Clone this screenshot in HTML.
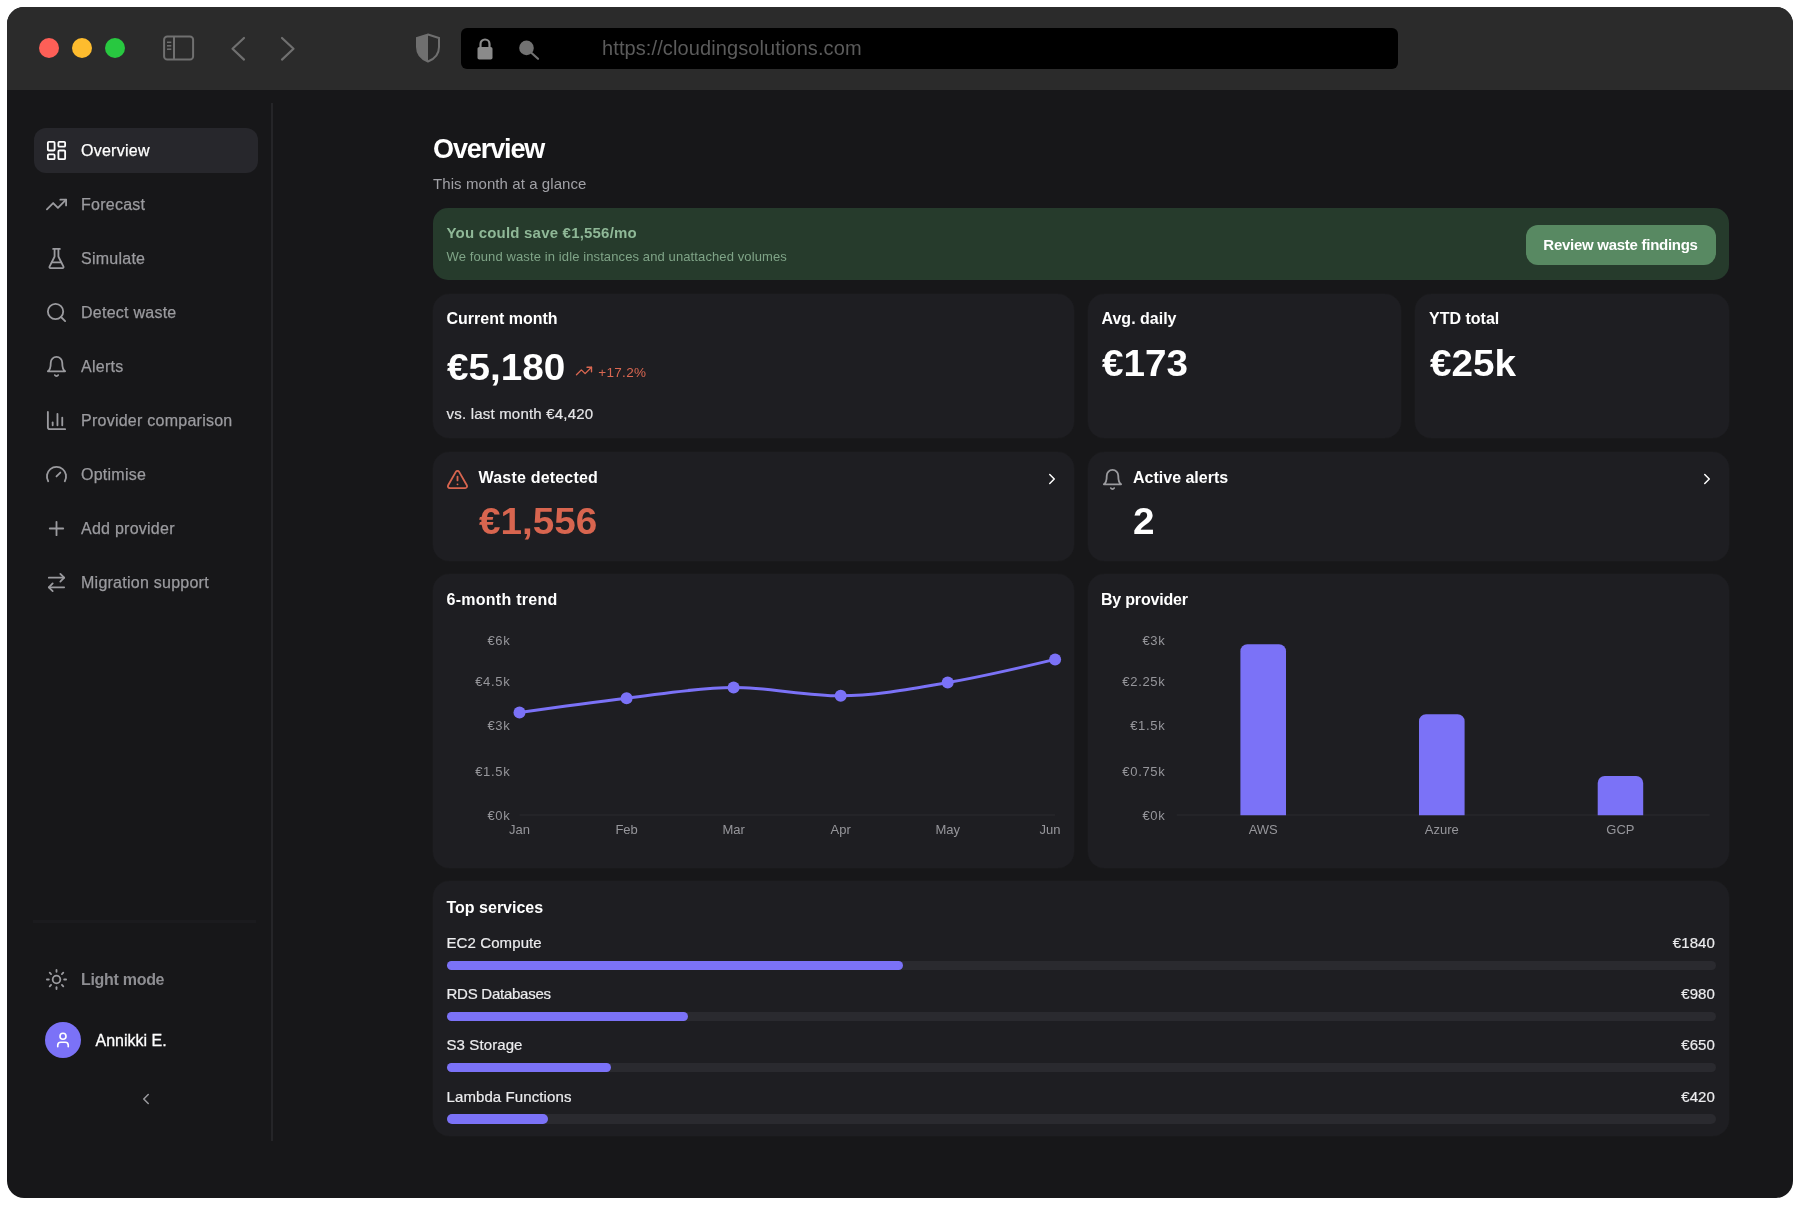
<!DOCTYPE html>
<html lang="en">
<head>
<meta charset="utf-8">
<title>Overview</title>
<style>
*{box-sizing:border-box;margin:0;padding:0}
html,body{width:1804px;height:1210px;background:#fff;overflow:hidden}
body{font-family:"Liberation Sans",sans-serif;color:#fff;position:relative}
.abs{position:absolute}
#win{position:absolute;left:7px;top:7px;width:1786px;height:1191px;border-radius:17px;background:#171719;overflow:hidden}
#o{position:absolute;left:-7px;top:-7px;width:1804px;height:1210px;will-change:transform}
#bar{position:absolute;left:0;top:0;width:1804px;height:90px;background:#2b2b2b}
.dot{position:absolute;top:38px;width:20px;height:20px;border-radius:50%}
#url{position:absolute;left:461px;top:28px;width:937px;height:41px;border-radius:6px;background:#000}
#urltxt{position:absolute;left:602px;top:35px;font-size:20px;line-height:26px;color:#5b5b5b;white-space:nowrap;letter-spacing:0.1px}
/* sidebar */
#side{position:absolute;left:0;top:0;width:272px;height:1210px}
#vline{position:absolute;left:271.300px;top:103px;width:1.300px;height:1038px;background:#252528}
#hline{position:absolute;left:33px;top:920.300px;width:223px;height:2.600px;background:#1b1b1e}
.nav{position:absolute;left:34px;width:224px;height:45px;border-radius:12px;font-size:16px;line-height:45px;color:#9b9b9f;white-space:nowrap;letter-spacing:0.25px;-webkit-text-stroke:0.25px currentColor}
.nav.on{background:#27272c;color:#fff}
.nav span{position:absolute;left:47px;top:0}
.nav svg{position:absolute;left:11px;top:11px;width:23px;height:23px;fill:none;stroke:currentColor;stroke-width:1.9;stroke-linecap:round;stroke-linejoin:round}
/* main */
.card{position:absolute;background:#1e1e22;border-radius:16px;box-shadow:0 0 0 1px rgba(255,255,255,0.012)}
.h{position:absolute;font-weight:bold;font-size:16px;line-height:20px;color:#fff;white-space:nowrap}
.big{position:absolute;font-weight:bold;font-size:36.5px;line-height:40px;color:#fff;white-space:nowrap;letter-spacing:0;transform:scaleX(1.06);transform-origin:0 50%}
.t{position:absolute;white-space:nowrap}
.svc{font-size:15px;line-height:20px;color:#ececee;letter-spacing:0.1px;-webkit-text-stroke:0.2px #ececee}
</style>
</head>
<body>
<div id="win"><div id="o">
  <div id="bar">
    <div class="dot" style="left:39px;background:#fe5f57"></div>
    <div class="dot" style="left:72px;background:#febc2e"></div>
    <div class="dot" style="left:105px;background:#28c840"></div>
    <!-- sidebar toggle -->
    <svg class="abs" style="left:162px;top:34px" width="34" height="30" viewBox="0 0 34 30" fill="none" stroke="#707070" stroke-width="2">
      <rect x="2.100" y="2.600" width="29" height="23" rx="3.200"/>
      <line x1="12" y1="2.600" x2="12" y2="25.600"/>
      <line x1="5" y1="8.300" x2="9.300" y2="8.300" stroke-width="1.500"/>
      <line x1="5" y1="11.800" x2="9.300" y2="11.800" stroke-width="1.500"/>
      <line x1="5" y1="15.200" x2="9.300" y2="15.200" stroke-width="1.500"/>
    </svg>
    <svg class="abs" style="left:227px;top:35px" width="24" height="28" viewBox="0 0 24 28" fill="none" stroke="#707070" stroke-width="2.200" stroke-linecap="round" stroke-linejoin="round"><path d="M17 3 L5.500 13.800 L17 24.600"/></svg>
    <svg class="abs" style="left:277px;top:35px" width="24" height="28" viewBox="0 0 24 28" fill="none" stroke="#707070" stroke-width="2.200" stroke-linecap="round" stroke-linejoin="round"><path d="M5 3 L16.500 13.800 L5 24.600"/></svg>
    <!-- shield -->
    <svg class="abs" style="left:415px;top:33px" width="26" height="30" viewBox="0 0 26 30">
      <path d="M13 1.5 L24 5 V14 C24 21 19.5 26 13 28.5 C6.500 26 2 21 2 14 V5 Z" fill="none" stroke="#6f6f6f" stroke-width="2"/>
      <path d="M13 1.5 L2 5 V14 C2 21 6.500 26 13 28.500 Z" fill="#6f6f6f"/>
    </svg>
    <div id="url"></div>
    <!-- lock -->
    <svg class="abs" style="left:476px;top:37px" width="18" height="24" viewBox="0 0 18 24">
      <path d="M4.500 11 V7 a4.500 4.500 0 0 1 9 0 V11" fill="none" stroke="#8a8a8a" stroke-width="2.2"/>
      <rect x="1.500" y="10" width="15" height="12.500" rx="1.800" fill="#8a8a8a"/>
    </svg>
    <!-- search -->
    <svg class="abs" style="left:517px;top:38px" width="24" height="24" viewBox="0 0 24 24">
      <circle cx="9.500" cy="9.900" r="7.300" fill="#727272"/>
      <line x1="14" y1="14.500" x2="21" y2="20.800" stroke="#727272" stroke-width="2.200" stroke-linecap="round"/>
    </svg>
    <div id="urltxt">https://cloudingsolutions.com</div>
  </div>

  <div id="vline"></div>
  <div id="hline"></div>
  <div id="side">
    <div class="nav on" style="top:128px"><svg viewBox="0 0 24 24"><rect x="3" y="3" width="7" height="9" rx="1"/><rect x="14" y="3" width="7" height="5" rx="1"/><rect x="14" y="12" width="7" height="9" rx="1"/><rect x="3" y="16" width="7" height="5" rx="1"/></svg><span>Overview</span></div>
    <div class="nav" style="top:182px"><svg viewBox="0 0 24 24"><polyline points="22 7 13.5 15.5 8.5 10.5 2 17"/><polyline points="16 7 22 7 22 13"/></svg><span>Forecast</span></div>
    <div class="nav" style="top:236px"><svg viewBox="0 0 24 24"><path d="M10 2v7.527a2 2 0 0 1-.211.896L4.720 20.550a1 1 0 0 0 .9 1.450h12.760a1 1 0 0 0 .9-1.450l-5.069-10.127A2 2 0 0 1 14 9.527V2"/><path d="M8.500 2h7"/><path d="M7 16h10"/></svg><span>Simulate</span></div>
    <div class="nav" style="top:290px"><svg viewBox="0 0 24 24"><circle cx="11" cy="11" r="8"/><path d="m21 21-4.300-4.300"/></svg><span>Detect waste</span></div>
    <div class="nav" style="top:344px"><svg viewBox="0 0 24 24"><path d="M6 8a6 6 0 0 1 12 0c0 7 3 9 3 9H3s3-2 3-9"/><path d="M10.300 21a1.940 1.940 0 0 0 3.400 0"/></svg><span>Alerts</span></div>
    <div class="nav" style="top:398px"><svg viewBox="0 0 24 24"><path d="M3 3v16a2 2 0 0 0 2 2h16"/><path d="M18 17V9"/><path d="M13 17V5"/><path d="M8 17v-3"/></svg><span>Provider comparison</span></div>
    <div class="nav" style="top:452px"><svg viewBox="0 0 24 24"><path d="m12 14 4-4"/><path d="M3.340 19a10 10 0 1 1 17.320 0"/></svg><span>Optimise</span></div>
    <div class="nav" style="top:506px"><svg viewBox="0 0 24 24"><path d="M5 12h14"/><path d="M12 5v14"/></svg><span>Add provider</span></div>
    <div class="nav" style="top:560px"><svg viewBox="0 0 24 24"><path d="m16 3 4 4-4 4"/><path d="M20 7H4"/><path d="m8 21-4-4 4-4"/><path d="M4 17h16"/></svg><span>Migration support</span></div>
    <div class="nav" style="top:957px"><svg viewBox="0 0 24 24"><circle cx="12" cy="12" r="4"/><path d="M12 2v2"/><path d="M12 20v2"/><path d="m4.930 4.930 1.410 1.410"/><path d="m17.660 17.660 1.410 1.410"/><path d="M2 12h2"/><path d="M20 12h2"/><path d="m6.340 17.660-1.410 1.410"/><path d="m19.070 4.930-1.410 1.410"/></svg><span style="font-weight:bold;letter-spacing:-0.3px;-webkit-text-stroke:0;color:#8e8e92">Light mode</span></div>
    <div class="abs" style="left:45px;top:1022px;width:36px;height:36px;border-radius:50%;background:#7b72f7"></div>
    <svg class="abs" style="left:54px;top:1031px" width="18" height="18" viewBox="0 0 24 24" fill="none" stroke="#fff" stroke-width="2.2" stroke-linecap="round" stroke-linejoin="round"><path d="M19 21v-2a4 4 0 0 0-4-4H9a4 4 0 0 0-4 4v2"/><circle cx="12" cy="7" r="4"/></svg>
    <div class="t" style="left:95.500px;top:1031px;font-size:16px;line-height:20px;color:#fff;-webkit-text-stroke:0.3px #fff">Annikki E.</div>
    <svg class="abs" style="left:137px;top:1090px" width="18" height="18" viewBox="0 0 24 24" fill="none" stroke="#9b9b9f" stroke-width="2" stroke-linecap="round" stroke-linejoin="round"><path d="m15 18-6-6 6-6"/></svg>
  </div>

  <div id="main">
    <div class="t" id="title" style="left:433px;top:132px;font-size:27px;line-height:34px;font-weight:bold;color:#fff;letter-spacing:-1.1px">Overview</div>
    <div class="t" id="sub" style="left:433px;top:174px;font-size:15px;line-height:20px;color:#a1a1a6;letter-spacing:0.08px">This month at a glance</div>

    <!-- banner -->
    <div class="abs" style="left:433px;top:208.300px;width:1296px;height:71.700px;border-radius:15px;background:#263b2c"></div>
    <div class="t" id="b1" style="left:446.500px;top:223px;font-size:15px;line-height:20px;font-weight:bold;color:#8fb897;letter-spacing:0.2px">You could save €1,556/mo</div>
    <div class="t" id="b2" style="left:446.500px;top:248px;font-size:13px;line-height:18px;color:#7fa487;letter-spacing:0.11px">We found waste in idle instances and unattached volumes</div>
    <div class="abs" style="left:1525.500px;top:224.500px;width:190px;height:40px;border-radius:12px;background:#588962"></div>
    <div class="t" id="btn" style="left:1525.500px;top:224.500px;width:190px;height:40px;line-height:40px;text-align:center;font-size:15px;font-weight:bold;color:#fff;letter-spacing:-0.27px">Review waste findings</div>

    <!-- row 1 -->
    <div class="card" style="left:433px;top:293.800px;width:641px;height:144.700px"></div>
    <div class="card" style="left:1087.600px;top:293.800px;width:313.700px;height:144.700px"></div>
    <div class="card" style="left:1415.300px;top:293.800px;width:313.700px;height:144.700px"></div>
    <div class="h" id="h1" style="left:446.500px;top:309px">Current month</div>
    <div class="big" id="v1" style="left:446.500px;top:348px">€5,180</div>
    <svg class="abs" style="left:575.300px;top:362.300px" width="18" height="18" viewBox="0 0 24 24" fill="none" stroke="#da6751" stroke-width="1.800" stroke-linecap="round" stroke-linejoin="round"><polyline points="22 7 13.5 15.5 8.5 10.5 2 17"/><polyline points="16 7 22 7 22 13"/></svg>
    <div class="t" id="pct" style="left:598.300px;top:362.500px;font-size:13.500px;line-height:20px;color:#da6751;letter-spacing:0.3px">+17.2%</div>
    <div class="t" id="vs" style="left:446.500px;top:404px;font-size:15px;line-height:20px;color:#e6e6e8;letter-spacing:0.2px;-webkit-text-stroke:0.2px #e6e6e8">vs. last month €4,420</div>
    <div class="h" id="h2" style="left:1101.500px;top:309px">Avg. daily</div>
    <div class="big" id="v2" style="left:1101.500px;top:343.700px">€173</div>
    <div class="h" id="h3" style="left:1429px;top:309px">YTD total</div>
    <div class="big" id="v3" style="left:1429.500px;top:343.700px">€25k</div>

    <!-- row 2 -->
    <div class="card" style="left:433px;top:452px;width:641px;height:108.600px"></div>
    <div class="card" style="left:1087.600px;top:452px;width:641.400px;height:108.600px"></div>
    <svg class="abs" style="left:446px;top:467.500px" width="23" height="23" viewBox="0 0 24 24" fill="none" stroke="#d8654f" stroke-width="1.900" stroke-linecap="round" stroke-linejoin="round"><path d="m21.730 18-8-14a2 2 0 0 0-3.480 0l-8 14A2 2 0 0 0 4 21h16a2 2 0 0 0 1.730-3"/><path d="M12 9v4"/><path d="M12 17h.01"/></svg>
    <div class="h" id="h4" style="left:478.500px;top:468px;letter-spacing:0.2px">Waste detected</div>
    <div class="big" id="v4" style="left:478.500px;top:501.500px;color:#d8654f">€1,556</div>
    <svg class="abs" style="left:1042.500px;top:469.800px" width="18" height="18" viewBox="0 0 24 24" fill="none" stroke="#fff" stroke-width="2" stroke-linecap="round" stroke-linejoin="round"><path d="m9 18 6-6-6-6"/></svg>
    <svg class="abs" style="left:1101px;top:467.500px" width="23" height="23" viewBox="0 0 24 24" fill="none" stroke="#9b9b9f" stroke-width="1.900" stroke-linecap="round" stroke-linejoin="round"><path d="M6 8a6 6 0 0 1 12 0c0 7 3 9 3 9H3s3-2 3-9"/><path d="M10.300 21a1.940 1.940 0 0 0 3.400 0"/></svg>
    <div class="h" id="h5" style="left:1133px;top:468px">Active alerts</div>
    <div class="big" id="v5" style="left:1132.500px;top:501.500px">2</div>
    <svg class="abs" style="left:1697.500px;top:469.800px" width="18" height="18" viewBox="0 0 24 24" fill="none" stroke="#fff" stroke-width="2" stroke-linecap="round" stroke-linejoin="round"><path d="m9 18 6-6-6-6"/></svg>

    <!-- row 3 -->
    <div class="card" style="left:433px;top:574px;width:641px;height:294px"></div>
    <div class="card" style="left:1087.600px;top:574px;width:641.400px;height:294px"></div>
    <div class="h" id="h6" style="left:446.500px;top:590px;letter-spacing:0.27px">6-month trend</div>
    <div class="h" id="h7" style="left:1101px;top:590px;letter-spacing:-0.2px">By provider</div>
    <svg class="abs" style="left:433px;top:574px" width="1296" height="294" viewBox="433 574 1296 294" font-family="Liberation Sans, sans-serif" font-size="13" fill="#96969b">
      <line x1="519.5" y1="815" x2="1055.1" y2="815" stroke="#2a2a2f" stroke-width="1"/>
      <text x="510.5" y="644.7" text-anchor="end" letter-spacing="0.7">€6k</text>
      <text x="510.5" y="685.6" text-anchor="end" letter-spacing="0.7">€4.5k</text>
      <text x="510.5" y="729.9" text-anchor="end" letter-spacing="0.7">€3k</text>
      <text x="510.5" y="775.5" text-anchor="end" letter-spacing="0.7">€1.5k</text>
      <text x="510.5" y="820" text-anchor="end" letter-spacing="0.7">€0k</text>
      <text x="519.5" y="833.8" text-anchor="middle">Jan</text>
      <text x="626.6" y="833.8" text-anchor="middle">Feb</text>
      <text x="733.6" y="833.8" text-anchor="middle">Mar</text>
      <text x="840.7" y="833.8" text-anchor="middle">Apr</text>
      <text x="947.7" y="833.8" text-anchor="middle">May</text>
      <text x="1060.5" y="833.8" text-anchor="end">Jun</text>
      <path d="M519.5,712.5C555.2,707.4,590.9,702.4,626.6,698.2C662.3,694.0,697.9,687.5,733.6,687.5C769.3,687.5,805.0,695.8,840.7,695.8C876.4,695.8,912.0,688.6,947.7,682.6C983.5,676.5,1019.3,668.0,1055.1,659.4" fill="none" stroke="#7b72f7" stroke-width="3" stroke-linecap="round"/>
      <circle cx="519.5" cy="712.5" r="6" fill="#7b72f7"/>
      <circle cx="626.6" cy="698.2" r="6" fill="#7b72f7"/>
      <circle cx="733.6" cy="687.5" r="6" fill="#7b72f7"/>
      <circle cx="840.7" cy="695.8" r="6" fill="#7b72f7"/>
      <circle cx="947.7" cy="682.6" r="6" fill="#7b72f7"/>
      <circle cx="1055.1" cy="659.4" r="6" fill="#7b72f7"/>
      <line x1="1176.7" y1="815" x2="1709.7" y2="815" stroke="#2a2a2f" stroke-width="1"/>
      <text x="1165.5" y="644.7" text-anchor="end" letter-spacing="0.7">€3k</text>
      <text x="1165.5" y="685.6" text-anchor="end" letter-spacing="0.7">€2.25k</text>
      <text x="1165.5" y="729.9" text-anchor="end" letter-spacing="0.7">€1.5k</text>
      <text x="1165.5" y="775.5" text-anchor="end" letter-spacing="0.7">€0.75k</text>
      <text x="1165.5" y="820" text-anchor="end" letter-spacing="0.7">€0k</text>
      <path d="M1240.4,815.2V651.2a7,7 0 0 1 7,-7H1279a7,7 0 0 1 7,7V815.2Z" fill="#7b72f7"/>
      <text x="1263.2" y="833.8" text-anchor="middle">AWS</text>
      <path d="M1419,815.2V721.3a7,7 0 0 1 7,-7H1457.6a7,7 0 0 1 7,7V815.2Z" fill="#7b72f7"/>
      <text x="1441.8" y="833.8" text-anchor="middle">Azure</text>
      <path d="M1597.7,815.2V783a7,7 0 0 1 7,-7H1636.2a7,7 0 0 1 7,7V815.2Z" fill="#7b72f7"/>
      <text x="1620.4" y="833.8" text-anchor="middle">GCP</text>
    </svg>

    <!-- row 4 -->
    <div class="card" style="left:433px;top:881.200px;width:1296px;height:254.500px"></div>
    <div class="h" id="h8" style="left:446.500px;top:898px">Top services</div>
    <div class="t svc" style="left:446.500px;top:932.9px">EC2 Compute</div>
    <div class="t svc" style="right:89px;top:932.9px">€1840</div>
    <div class="abs" style="left:446.500px;top:960.7px;width:1269px;height:9.400px;border-radius:5px;background:#2a2a2f"></div>
    <div class="abs" style="left:446.500px;top:960.7px;width:456.7px;height:9.400px;border-radius:5px;background:#7b72f7"></div>
    <div class="t svc" style="left:446.500px;top:984.1px;letter-spacing:-0.25px">RDS Databases</div>
    <div class="t svc" style="right:89px;top:984.1px">€980</div>
    <div class="abs" style="left:446.500px;top:1011.9px;width:1269px;height:9.400px;border-radius:5px;background:#2a2a2f"></div>
    <div class="abs" style="left:446.500px;top:1011.9px;width:241.1px;height:9.400px;border-radius:5px;background:#7b72f7"></div>
    <div class="t svc" style="left:446.500px;top:1035.3px">S3 Storage</div>
    <div class="t svc" style="right:89px;top:1035.3px">€650</div>
    <div class="abs" style="left:446.500px;top:1063.1px;width:1269px;height:9.400px;border-radius:5px;background:#2a2a2f"></div>
    <div class="abs" style="left:446.500px;top:1063.1px;width:164.5px;height:9.400px;border-radius:5px;background:#7b72f7"></div>
    <div class="t svc" style="left:446.500px;top:1086.5px">Lambda Functions</div>
    <div class="t svc" style="right:89px;top:1086.5px">€420</div>
    <div class="abs" style="left:446.500px;top:1114.3px;width:1269px;height:9.400px;border-radius:5px;background:#2a2a2f"></div>
    <div class="abs" style="left:446.500px;top:1114.3px;width:101.3px;height:9.400px;border-radius:5px;background:#7b72f7"></div>
  </div>
</div></div>
</body>
</html>
